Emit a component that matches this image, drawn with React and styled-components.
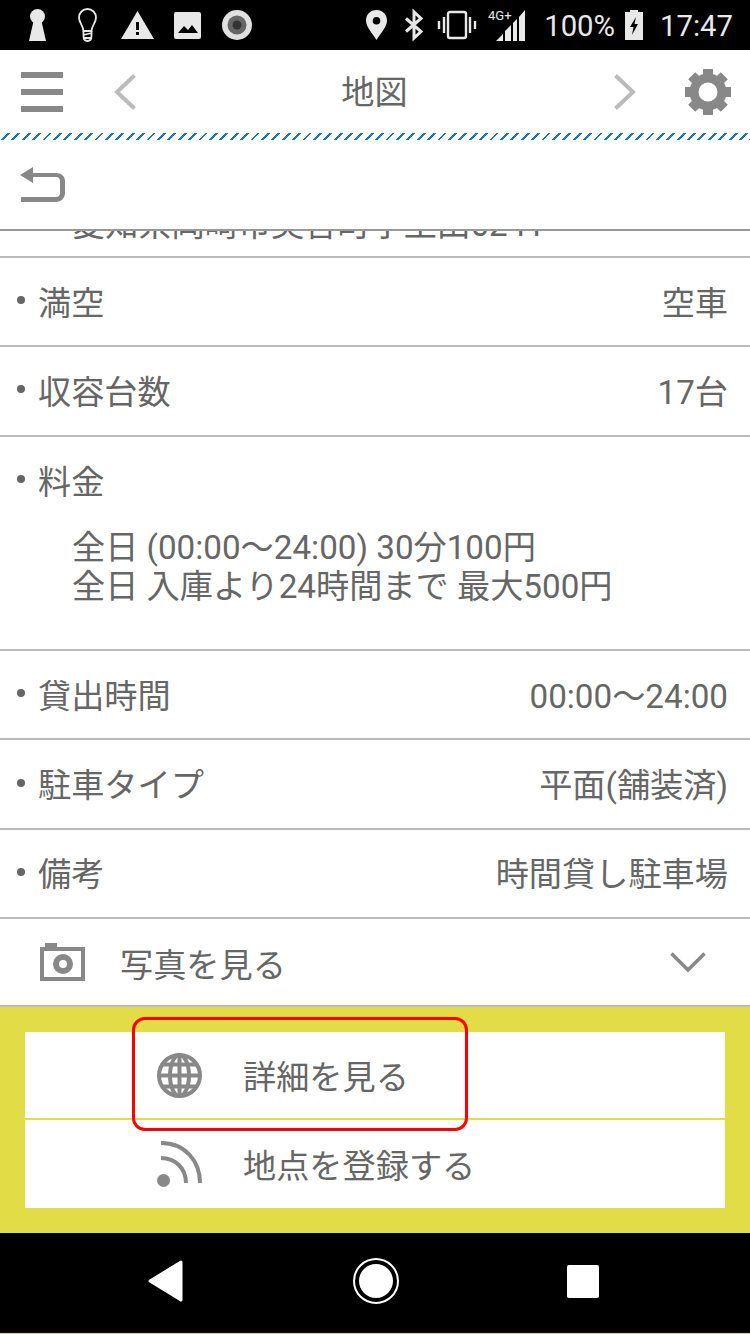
// App.jsx
import React from 'react';
import styled, { createGlobalStyle } from 'styled-components';

const GlobalStyle = createGlobalStyle`
  html, body {
    margin: 0;
    padding: 0;
    background: #e2dd46;
  }
  * {
    box-sizing: border-box;
  }
`;

const Page = styled.div`
  width: 750px;
  height: 1333px;
  display: flex;
  flex-direction: column;
  background: #fff;
  color: #666;
  font-family: Roboto, "Noto Sans CJK JP", sans-serif;
  font-size: 33.2px;
`;

const StatusBar = styled.div`
  height: 50px;
  flex: none;
  display: flex;
  align-items: center;
  justify-content: space-between;
  padding: 0 17px 0 28px;
  background: #000;
  color: #e8e8e8;
`;

const StatusGroup = styled.div`
  display: flex;
  align-items: center;
`;

const StatusIcon = styled.svg`
  display: block;
  flex: none;
  overflow: visible;
  margin-left: ${(p) => p.$ml || 0}px;
`;

const StatusText = styled.span`
  font-size: 29.3px;
  line-height: 50px;
  padding-top: 2px;
  margin-left: ${(p) => p.$ml || 0}px;
`;

const Header = styled.header`
  height: 83px;
  flex: none;
  display: flex;
  align-items: center;
  padding: 0 19px 0 21px;
`;

const HeaderTitle = styled.div`
  flex: 1;
  text-align: center;
  line-height: 83px;
  padding: 2px 1px 0 0;
`;

const NavIcon = styled.svg`
  display: block;
  flex: none;
  margin-left: ${(p) => p.$ml || 0}px;
  margin-right: ${(p) => p.$mr || 0}px;
`;

const Stripe = styled.div`
  height: 7px;
  flex: none;
  background: repeating-linear-gradient(135deg, #fff 0 5.35px, #1a78c2 5.35px 7.35px);
`;

const BackBar = styled.div`
  height: 91px;
  flex: none;
  display: flex;
  align-items: center;
  padding-left: 20px;
  border-bottom: 2px solid #999;
`;

const ScrollArea = styled.div`
  flex: 1;
  overflow: hidden;
`;

const AddressRow = styled.div`
  height: 27px;
  overflow: hidden;
  border-bottom: 2px solid #bbb;
  padding-left: 72px;
`;

const AddressText = styled.div`
  margin-top: -25px;
  line-height: 38px;
  white-space: nowrap;
`;

const Row = styled.div`
  height: 89.3px;
  display: flex;
  align-items: center;
  justify-content: space-between;
  padding: 0 22px 3px 17px;
  border-bottom: 2px solid #bbb;
`;

const Label = styled.div`
  display: flex;
  align-items: center;
  gap: 13px;
`;

const Bullet = styled.span`
  width: 8px;
  height: 8px;
  border-radius: 50%;
  background: #666;
`;

const FeeRow = styled.div`
  height: 214.6px;
  border-bottom: 2px solid #bbb;
`;

const FeeHead = styled.div`
  height: 91px;
  display: flex;
  align-items: center;
  padding: 0 0 6px 17px;
`;

const FeeLines = styled.div`
  padding-left: 72px;
  line-height: 39px;
  white-space: nowrap;
`;

const PhotoRow = styled.div`
  height: 88px;
  display: flex;
  align-items: center;
  padding: 0 44px 0 40px;
  border-bottom: 2px solid #bbb;
`;

const PhotoLabel = styled.div`
  flex: 1;
  margin-left: 35px;
`;

const ActionArea = styled.div`
  position: relative;
  height: 226px;
  flex: none;
  padding: 25px;
  background: #e2dd46;
`;

const ActionPanel = styled.div`
  height: 176px;
  background: #fff;
`;

const ActionRow = styled.div`
  height: 88px;
  display: flex;
  align-items: center;
  padding-left: 132px;
  gap: 41px;
  border-bottom: ${(p) => (p.$divider ? '2px solid #e2dd46' : 'none')};
`;

const ActionText = styled.span`
  padding-bottom: 2px;
`;

const Highlight = styled.div`
  position: absolute;
  left: 132px;
  top: 10px;
  width: 336px;
  height: 114px;
  border: 3px solid #f00;
  border-radius: 13px;
`;

const BottomNav = styled.nav`
  height: 100px;
  flex: none;
  display: flex;
  align-items: center;
  justify-content: space-between;
  padding: 0 151px 4px 148px;
  background: #000;
`;

const Gear = () => {
  const teeth = [0, 45, 90, 135, 180, 225, 270, 315];
  return (
    <NavIcon width="46" height="46" viewBox="0 0 46 46">
      {teeth.map((a) => (
        <rect key={a} x="18" y="0" width="10" height="9" fill="#888" transform={`rotate(${a} 23 23)`} />
      ))}
      <circle cx="23" cy="23" r="14" fill="none" stroke="#888" strokeWidth="9" />
    </NavIcon>
  );
};

const App = () => (
  <>
    <GlobalStyle />
    <Page>
      <StatusBar>
        <StatusGroup>
          <StatusIcon width="19" height="32" viewBox="0 0 19 32">
            <circle cx="9.5" cy="7.5" r="7.5" fill="#e8e8e8" />
            <path d="M6 10 H13 L18 32 H1 Z" fill="#e8e8e8" />
          </StatusIcon>
          <StatusIcon $ml={31} width="19" height="34" viewBox="0 0 19 34" fill="none" stroke="#e8e8e8" strokeWidth="1.8">
            <path d="M5.5 23 C5 17 1 15 1 9.5 A8.5 8.5 0 0 1 18 9.5 C18 15 14 17 13.5 23 Z" />
            <path d="M5.5 23 V28 C5.5 31 7 33 9.5 33 C12 33 13.5 31 13.5 28 V23 M5.5 27 L13.5 25 M5.5 30 H13" />
          </StatusIcon>
          <StatusIcon $ml={24} width="33" height="28" viewBox="0 0 33 28">
            <path fillRule="evenodd" fill="#e8e8e8" d="M16.5 0 L33 28 H0 Z M15 11 V19 H18 V11 Z M15 21 V24 H18 V21 Z" />
          </StatusIcon>
          <StatusIcon $ml={20} width="27" height="27" viewBox="0 0 27 27">
            <rect width="27" height="27" rx="2" fill="#e8e8e8" />
            <path d="M4 21 L10 14 L14 18 L18 13 L24 21 Z" fill="#000" />
          </StatusIcon>
          <StatusIcon $ml={21} width="30" height="30" viewBox="0 0 30 30">
            <circle cx="15" cy="15" r="15" fill="#e0e0e0" />
            <circle cx="15" cy="15" r="9.5" fill="#666" />
            <circle cx="15" cy="15" r="4.5" fill="#333" />
          </StatusIcon>
        </StatusGroup>
        <StatusGroup>
          <StatusIcon width="21" height="30" viewBox="0 0 21 30">
            <path fillRule="evenodd" fill="#e8e8e8" d="M10.5 0 C16.5 0 21 4.5 21 10.5 C21 17 14 24 10.5 30 C7 24 0 17 0 10.5 C0 4.5 4.5 0 10.5 0 Z M10.5 7 A3.8 3.8 0 1 0 10.5 14.6 A3.8 3.8 0 1 0 10.5 7 Z" />
          </StatusIcon>
          <StatusIcon $ml={18} width="18" height="28" viewBox="0 0 18 28" fill="none" stroke="#e8e8e8" strokeWidth="3">
            <path d="M1 7.5 L16 20.5 L9 27 V1 L16 7.5 L1 20.5" />
          </StatusIcon>
          <StatusIcon $ml={15} width="38" height="28" viewBox="0 0 38 28" fill="none" stroke="#e8e8e8">
            <rect x="10" y="1" width="18" height="26" rx="2" strokeWidth="2.4" />
            <path d="M1 10 V18 M6 6 V22 M32 6 V22 M37 10 V18" strokeWidth="2.4" />
          </StatusIcon>
          <StatusIcon $ml={12} width="38" height="32" viewBox="0 0 38 32">
            <text x="0" y="11" fontSize="13" fontFamily="Roboto" fill="#e8e8e8">4G+</text>
            <path d="M8 32 L15 25 V32 Z M17 32 V22 L23 16 V32 Z M25 32 V14 L29 10 V32 Z M31 32 V8 L37 1 V32 Z" fill="#e8e8e8" />
          </StatusIcon>
          <StatusText $ml={18}>100%</StatusText>
          <StatusIcon $ml={10} width="18" height="30" viewBox="0 0 18 30">
            <path fillRule="evenodd" fill="#e8e8e8" d="M5 0 H13 V2 H18 V30 H0 V2 H5 Z M11 7 L5 17 H8.5 L7 25 L13 14 H9.5 Z" />
          </StatusIcon>
          <StatusText $ml={17}>17:47</StatusText>
        </StatusGroup>
      </StatusBar>

      <Header>
        <NavIcon width="42" height="40" viewBox="0 0 42 40">
          <path d="M0 0 H42 V6 H0 Z M0 17 H42 V23 H0 Z M0 34 H42 V40 H0 Z" fill="#888" />
        </NavIcon>
        <NavIcon $ml={51} width="22" height="36" viewBox="0 0 22 36" fill="none" stroke="#bbb" strokeWidth="4">
          <path d="M20.5 1.5 L3 18 L20.5 34.5" />
        </NavIcon>
        <HeaderTitle>地図</HeaderTitle>
        <NavIcon $mr={49} width="22" height="36" viewBox="0 0 22 36" fill="none" stroke="#bbb" strokeWidth="4">
          <path d="M1.5 1.5 L19 18 L1.5 34.5" />
        </NavIcon>
        <Gear />
      </Header>
      <Stripe />

      <BackBar>
        <svg width="46" height="36" viewBox="0 0 46 36">
          <path d="M13 0 V6 H36 C41 6 45 9 45 14 V26 C45 31 41 35 36 35 H1 V30 H36 C38.5 30 40 28.5 40 26 V14 C40 11.5 38.5 10 36 10 H13 V16 L0 8 Z" fill="#888" />
        </svg>
      </BackBar>

      <ScrollArea>
        <AddressRow>
          <AddressText>愛知県岡崎市美合町字土田6241</AddressText>
        </AddressRow>
        <Row>
          <Label><Bullet />満空</Label>
          <span>空車</span>
        </Row>
        <Row>
          <Label><Bullet />収容台数</Label>
          <span>17台</span>
        </Row>
        <FeeRow>
          <FeeHead>
            <Label><Bullet />料金</Label>
          </FeeHead>
          <FeeLines>
            <div>全日 (00:00～24:00) 30分100円</div>
            <div>全日 入庫より24時間まで 最大500円</div>
          </FeeLines>
        </FeeRow>
        <Row>
          <Label><Bullet />貸出時間</Label>
          <span>00:00～24:00</span>
        </Row>
        <Row>
          <Label><Bullet />駐車タイプ</Label>
          <span>平面(舗装済)</span>
        </Row>
        <Row>
          <Label><Bullet />備考</Label>
          <span>時間貸し駐車場</span>
        </Row>
        <PhotoRow>
          <svg width="45" height="38" viewBox="0 0 45 38">
            <path fillRule="evenodd" fill="#888" d="M5 0 H17 V4 H45 V38 H0 V4 H5 Z M4 8 V34 H41 V8 Z M23 11 A10 10 0 1 1 23 31 A10 10 0 1 1 23 11 Z M23 17 A4 4 0 1 0 23 25 A4 4 0 1 0 23 17 Z" />
          </svg>
          <PhotoLabel>写真を見る</PhotoLabel>
          <svg width="36" height="21" viewBox="0 0 36 21" fill="none" stroke="#888" strokeWidth="3.5">
            <path d="M1.5 1.5 L18 18 L34.5 1.5" />
          </svg>
        </PhotoRow>
      </ScrollArea>

      <ActionArea>
        <ActionPanel>
          <ActionRow $divider>
            <svg width="45" height="45" viewBox="0 0 45 45" fill="none" stroke="#888" strokeWidth="4">
              <circle cx="22.5" cy="22.5" r="20.5" />
              <ellipse cx="22.5" cy="22.5" rx="9.5" ry="20.5" />
              <path d="M22.5 2 V43 M2 22.5 H43 M5 11.5 H40 M5 33.5 H40" />
            </svg>
            <ActionText>詳細を見る</ActionText>
          </ActionRow>
          <ActionRow>
            <svg width="45" height="46" viewBox="0 0 45 46" fill="none" stroke="#888" strokeWidth="4">
              <circle cx="6.5" cy="39.5" r="6.5" fill="#888" stroke="none" />
              <path d="M4 17 C19 17 29 28 29 42" />
              <path d="M4 2 C28 2 43 20 43 42" />
            </svg>
            <ActionText>地点を登録する</ActionText>
          </ActionRow>
        </ActionPanel>
        <Highlight />
      </ActionArea>

      <BottomNav>
        <svg width="36" height="42" viewBox="0 0 36 42">
          <path d="M33 2 V40 L2 21 Z" fill="#fff" stroke="#fff" strokeWidth="3" strokeLinejoin="round" />
        </svg>
        <svg width="46" height="46" viewBox="0 0 46 46">
          <circle cx="23" cy="23" r="22" fill="none" stroke="#fff" strokeWidth="2" />
          <circle cx="23" cy="23" r="17" fill="#fff" />
        </svg>
        <svg width="32" height="33" viewBox="0 0 32 33">
          <rect width="32" height="33" rx="2" fill="#fff" />
        </svg>
      </BottomNav>
    </Page>
  </>
);

export default App;
